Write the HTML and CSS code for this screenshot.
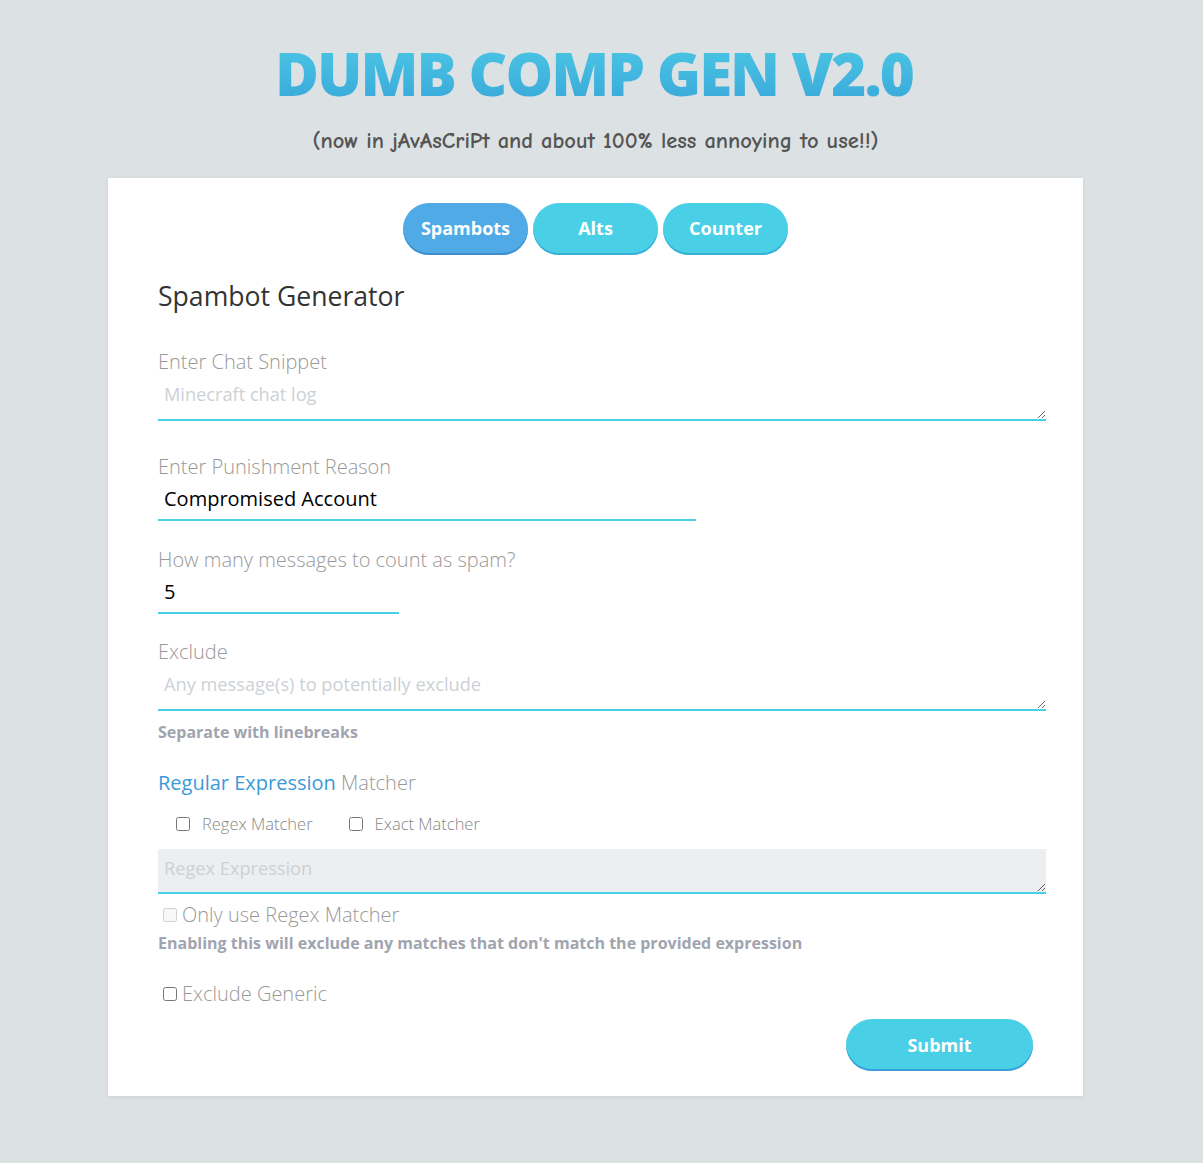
FILE: index.html
```html
<!DOCTYPE html>
<html>
<head>
<meta charset="utf-8">
<link rel="stylesheet" href="styles.css">
</head>
<body>
<header class="header">
  <h1 class="title">DUMB COMP GEN V2.0</h1>
  <p class="subtitle">(now in jAvAsCriPt and about 100% less annoying to use!!)</p>
</header>
<main class="card">
  <nav class="tabs">
    <button class="tab tab-active">Spambots</button>
    <button class="tab">Alts</button>
    <button class="tab">Counter</button>
  </nav>
  <h2 class="heading">Spambot Generator</h2>

  <div class="field field-first">
    <label class="label">Enter Chat Snippet</label>
    <textarea class="area" placeholder="Minecraft chat log"></textarea>
  </div>

  <div class="field field-reason">
    <label class="label">Enter Punishment Reason</label>
    <input class="input input-wide" type="text" value="Compromised Account">
  </div>

  <div class="field field-count">
    <label class="label">How many messages to count as spam?</label>
    <input class="input input-narrow" type="text" value="5">
  </div>

  <div class="field field-exclude">
    <label class="label">Exclude</label>
    <textarea class="area" placeholder="Any message(s) to potentially exclude"></textarea>
    <p class="help">Separate with linebreaks</p>
  </div>

  <div class="field field-regex">
    <div class="label"><span class="blue">Regular Expression</span> Matcher</div>
    <div class="checks">
      <label class="check"><input type="checkbox" class="box"> Regex Matcher</label>
      <label class="check"><input type="checkbox" class="box"> Exact Matcher</label>
    </div>
    <textarea class="area area-gray" placeholder="Regex Expression" disabled></textarea>
    <label class="check-big"><input type="checkbox" class="box-small" disabled>Only use Regex Matcher</label>
    <p class="help help-2">Enabling this will exclude any matches that don't match the provided expression</p>
  </div>

  <label class="check-big check-generic"><input type="checkbox" class="box-small">Exclude Generic</label>

  <div class="actions">
    <button class="submit">Submit</button>
  </div>
</main>
</body>
</html>
```

FILE: styles.css
```css
* { box-sizing: border-box; }
html, body { margin: 0; padding: 0; }
body {
  background: #dce1e3;
  font-family: "Open Sans", "Liberation Sans", sans-serif;
  min-height: 1163px;
}
.header { text-align: center; padding: 43px 12px 0 0; }
.title {
  margin: 0 0 0 -3px;
  font-family: "Open Sans", sans-serif;
  font-weight: 800;
  font-size: 60px;
  letter-spacing: -2px;
  line-height: 1;
  background: linear-gradient(#4bc6e4, #3aa9da);
  -webkit-background-clip: text;
  background-clip: text;
  color: transparent;
  display: inline-block;
}
.subtitle {
  margin: 25px 0 0;
  font-family: "Comic Sans MS", "Comic Neue", "DejaVu Sans", cursive;
  font-weight: bold;
  font-size: 22.5px;
  line-height: 26px;
  color: #555;
}
.card {
  width: 975px;
  margin: 24px 0 0 108px;
  background: #fff;
  padding: 25px 37px 25px 50px;
  box-shadow: 0 1px 4px rgba(0,0,0,0.08);
}
.tabs { display: flex; justify-content: center; gap: 5px; margin-left: -13px; }
.tab {
  width: 125px;
  height: 52px;
  border: none;
  border-radius: 26px;
  background: #4ad0e6;
  box-shadow: inset 0 -2px 0 #3ab0d8;
  color: #fff;
  font-family: "Open Sans", sans-serif;
  font-weight: 700;
  font-size: 18px;
  padding: 0 0 2px;
}
.tab-active { background: #4faae6; box-shadow: inset 0 -2px 0 #3d8fd0; }
.heading {
  margin: 23px 0 0;
  font-weight: 400;
  font-size: 26.6px;
  line-height: 36px;
  color: #333;
}
.field { display: flex; flex-direction: column; align-items: flex-start; }
.field-first { margin-top: 34px; }
.field-reason { margin-top: 32px; }
.field-count { margin-top: 25px; }
.field-exclude { margin-top: 24px; }
.field-regex { margin-top: 25px; }
.label {
  font-weight: 300;
  font-size: 20px;
  line-height: 28px;
  color: #999;
}
.blue { color: #3a9ad9; font-weight: 400; }
.area {
  width: 888px;
  height: 41px;
  margin-top: 4px;
  border: none;
  border-bottom: 2px solid #4ad0e6;
  padding: 2px 6px 6px;
  font-family: "Open Sans", sans-serif;
  font-size: 18.2px;
  line-height: 24px;
  resize: vertical;
  outline: none;
  background: #fff;
}
.area::placeholder { color: #ccd1d6; }
.area-gray { background: #eceef0; height: 45px; margin-top: 13px; padding-top: 7px; }
.input {
  height: 40px;
  margin-top: 0;
  border: none;
  border-bottom: 2px solid #4ad0e6;
  padding: 0 6px 4px;
  font-family: "Open Sans", sans-serif;
  font-size: 20px;
  color: #000;
  outline: none;
  background: #fff;
}
.input-wide { width: 538px; }
.input-narrow { width: 241px; }
.help {
  margin: 9px 0 0;
  font-weight: 700;
  font-size: 16px;
  line-height: 24px;
  color: #a0a4ae;
}
.checks { display: flex; gap: 36px; margin: 15px 0 0 18px; }
.check {
  display: flex;
  align-items: center;
  gap: 12px;
  font-weight: 300;
  font-size: 16.5px;
  line-height: 24px;
  color: #888;
}
.box { width: 14px; height: 14px; margin: 0; }
.check-big {
  display: flex;
  align-items: center;
  gap: 5px;
  margin: 7px 0 0 5px;
  font-weight: 300;
  font-size: 20px;
  line-height: 28px;
  color: #999;
}
.box-small { width: 14px; height: 14px; margin: 0; }
.help-2 { margin-top: 2px; }
.check-generic { margin-top: 25px; }
.actions { display: flex; justify-content: flex-end; margin-top: 11px; padding-right: 13px; }
.submit {
  width: 187px;
  height: 52px;
  border: none;
  border-radius: 26px;
  background: #4ad0e6;
  box-shadow: inset 0 -2px 0 #3a9ed8;
  color: #fff;
  font-family: "Open Sans", sans-serif;
  font-weight: 700;
  font-size: 18px;
}
```
